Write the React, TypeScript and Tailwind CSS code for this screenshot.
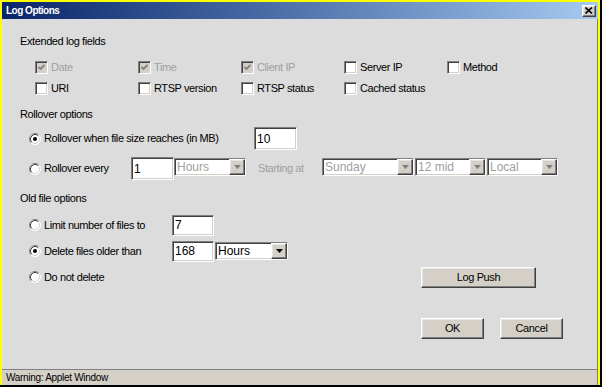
import React from 'react'

const sunken =
  'border border-t-[#808080] border-l-[#808080] border-r-white border-b-white shadow-[inset_1px_1px_0_#404040,inset_-1px_-1px_0_#d4d0c8]'
const raised =
  'border border-t-white border-l-white border-r-[#404040] border-b-[#404040] shadow-[inset_-1px_-1px_0_#808080,inset_1px_1px_0_#e6e6e6]'

const Check = ({ label, checked = false, disabled = false }: { label: string; checked?: boolean; disabled?: boolean }) => (
  <div className="flex items-center gap-[3px]">
    <span
      className={`w-[13px] h-[13px] flex items-center justify-center ${sunken} ${disabled ? 'bg-[#d4d0c8]' : 'bg-white'}`}
    >
      {checked && (
        <svg width="7" height="7" viewBox="0 0 7 7">
          <path d="M0.5 3 L2.5 5 L6.5 1" fill="none" stroke={disabled ? '#808080' : '#000'} strokeWidth="1.8" />
        </svg>
      )}
    </span>
    <span className={disabled ? 'text-[#a0a0a0]' : 'text-black'}>{label}</span>
  </div>
)

const Radio = ({ label, checked = false }: { label: string; checked?: boolean }) => (
  <div className="flex items-center gap-[3px]">
    <svg width="12" height="12" viewBox="0 0 12 12" className="shrink-0">
      <circle cx="6" cy="6" r="5.5" fill="#fff" />
      <path d="M2.11 9.89 A5.5 5.5 0 0 1 9.89 2.11" fill="none" stroke="#808080" />
      <path d="M9.89 2.11 A5.5 5.5 0 0 1 2.11 9.89" fill="none" stroke="#fff" />
      <path d="M2.82 9.18 A4.5 4.5 0 0 1 9.18 2.82" fill="none" stroke="#404040" />
      <path d="M9.18 2.82 A4.5 4.5 0 0 1 2.82 9.18" fill="none" stroke="#d4d0c8" />
      {checked && <circle cx="6" cy="6" r="2" fill="#000" />}
    </svg>
    <span>{label}</span>
  </div>
)

const Field = ({ value, className }: { value: string; className: string }) => (
  <div className={`bg-white ${sunken} ${className} flex items-center pl-[2px] text-[12px] tracking-normal text-black`}>
    {value}
  </div>
)

const Arrow = ({ disabled = false }: { disabled?: boolean }) => (
  <span className={`w-[16px] shrink-0 flex items-center justify-center bg-[#d4d0c8] ${raised}`}>
    <svg width="7" height="4" viewBox="0 0 7 4">
      <path d="M0 0 H7 L3.5 4 Z" fill={disabled ? '#808080' : '#000'} />
    </svg>
  </span>
)

const Combo = ({ value, className, disabled = false }: { value: string; className: string; disabled?: boolean }) => (
  <div className={`h-[18px] flex items-stretch bg-white ${sunken} ${className}`}>
    <span
      className={`flex-1 flex items-center pl-[2px] text-[12px] tracking-normal ${disabled ? 'text-[#a0a0a0]' : 'text-black'}`}
    >
      {value}
    </span>
    <Arrow disabled={disabled} />
  </div>
)

const Button = ({ label, className }: { label: string; className: string }) => (
  <button className={`h-[21px] bg-[#d4d0c8] ${raised} ${className} flex items-center justify-center text-black`}>
    {label}
  </button>
)

export default function App() {
  return (
    <div className="w-[602px] h-[387px] border-r-2 border-b-2 border-black font-['Liberation_Sans',Arial,sans-serif] text-[11px] tracking-[-0.4px] text-black">
      <div className="w-full h-full border-2 border-[#ffff00] flex flex-col">
        <div className="h-[17px] shrink-0 flex items-center justify-between bg-linear-to-r from-[#0a246a] to-[#a6caf0] pl-[4px] pr-[2px]">
          <span className="font-bold text-white text-[10px] tracking-[-0.5px]">Log Options</span>
          <span className={`w-[14px] h-[12px] flex items-center justify-center bg-[#d4d0c8] ${raised}`}>
            <svg width="8" height="7" viewBox="0 0 8 7">
              <path d="M0.5 0.5 L7 6.5 M7 0.5 L0.5 6.5" stroke="#000" strokeWidth="1.6" />
            </svg>
          </span>
        </div>

        <div className="h-[350px] shrink-0 bg-[#dcdcdc] border-r border-[#808080] flex flex-col">
          <div className="mt-[15px] h-[14px] ml-[18px] flex items-center">Extended log fields</div>
          <div className="mt-[9px] ml-[33px] grid grid-cols-[103px_103px_103px_103px_103px]">
            <div className="h-[20px] flex items-center"><Check label="Date" checked disabled /></div>
            <div className="h-[20px] flex items-center"><Check label="Time" checked disabled /></div>
            <div className="h-[20px] flex items-center"><Check label="Client IP" checked disabled /></div>
            <div className="h-[20px] flex items-center"><Check label="Server IP" /></div>
            <div className="h-[20px] flex items-center"><Check label="Method" /></div>
            <div className="mt-[1px] h-[20px] flex items-center"><Check label="URI" /></div>
            <div className="mt-[1px] h-[20px] flex items-center"><Check label="RTSP version" /></div>
            <div className="mt-[1px] h-[20px] flex items-center"><Check label="RTSP status" /></div>
            <div className="mt-[1px] h-[20px] flex items-center"><Check label="Cached status" /></div>
          </div>

          <div className="mt-[9px] h-[14px] ml-[18px] flex items-center">Rollover options</div>
          <div className="mt-[6px] h-[23px] ml-[27px] flex items-center">
            <div className="w-[225px]"><Radio label="Rollover when file size reaches (in MB)" checked /></div>
            <Field value="10" className="w-[43px] h-[23px]" />
          </div>
          <div className="mt-[7px] h-[23px] ml-[27px] flex items-center">
            <div className="w-[102px]"><Radio label="Rollover every" /></div>
            <Field value="1" className="w-[43px] h-[23px]" />
            <Combo value="Hours" className="w-[72px] -mt-[3px]" disabled />
            <span className="ml-[12px] w-[64px] text-[#a0a0a0]">Starting at</span>
            <Combo value="Sunday" className="w-[92px] -mt-[3px]" disabled />
            <Combo value="12 mid" className="ml-[1px] w-[71px] -mt-[3px]" disabled />
            <Combo value="Local" className="ml-[1px] w-[71px] -mt-[3px]" disabled />
          </div>

          <div className="mt-[11px] h-[14px] ml-[18px] flex items-center">Old file options</div>
          <div className="mt-[9px] h-[22px] ml-[27px] flex items-center">
            <div className="w-[143px]"><Radio label="Limit number of files to" /></div>
            <Field value="7" className="w-[42px] h-[21px]" />
          </div>
          <div className="mt-[4px] h-[22px] ml-[27px] flex items-center">
            <div className="w-[143px]"><Radio label="Delete files older than" checked /></div>
            <Field value="168" className="w-[42px] h-[21px]" />
            <Combo value="Hours" className="ml-[1px] w-[73px]" />
          </div>
          <div className="mt-[4px] h-[22px] ml-[27px] flex items-center">
            <div className="w-[392px]"><Radio label="Do not delete" /></div>
            <Button label="Log Push" className="w-[115px]" />
          </div>

          <div className="mt-[30px] ml-[419px] flex gap-[16px]">
            <Button label="OK" className="w-[63px]" />
            <Button label="Cancel" className="w-[63px]" />
          </div>
        </div>

        <div className="flex-1 bg-[#d4d0c8] border-t border-[#808080] border-r border-r-[#808080] flex items-center pl-[4px] text-[10px] tracking-[-0.3px]">
          Warning: Applet Window
        </div>
      </div>
    </div>
  )
}
